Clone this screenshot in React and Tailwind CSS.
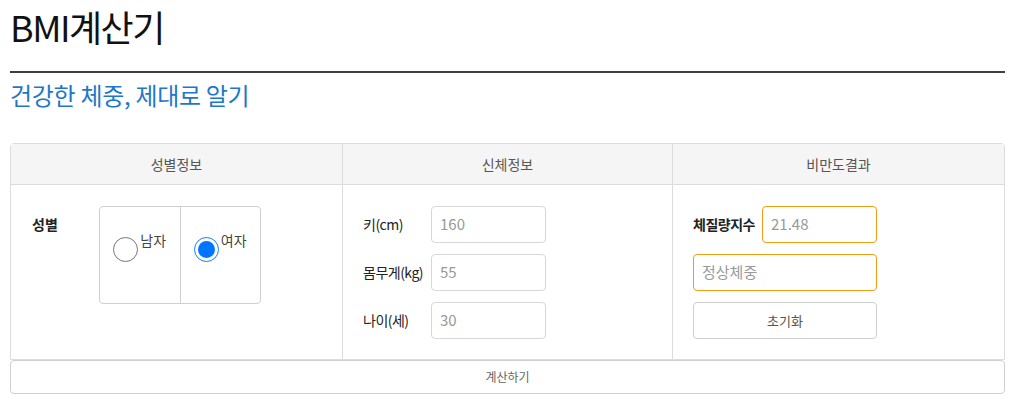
import React from "react";

const font = { fontFamily: '"Noto Sans CJK KR", "Noto Sans", sans-serif' };

function Radio({ checked, label }) {
  return (
    <div className="flex flex-1 items-start justify-center pt-[30px]">
      <span
        className={
          "box-border flex h-[25px] w-[25px] items-center justify-center rounded-full border " +
          (checked ? "border-[#1a7cff] border-[1.5px]" : "border-[#767676]")
        }
      >
        {checked && <span className="h-[17px] w-[17px] rounded-full bg-[#0075ff]" />}
      </span>
      <span className="ml-[2px] -mt-[7px] text-[14px] text-[#444] leading-[20px]">{label}</span>
    </div>
  );
}

function Field({ value, orange }) {
  return (
    <div
      className={
        "box-border flex h-[37px] w-[115px] items-center rounded-[4px] border bg-white px-[8px] text-[15px] text-[#999] " +
        (orange ? "border-[#f59d12]" : "border-[#d7d7d7]")
      }
    >
      {value}
    </div>
  );
}

export default function App() {
  return (
    <div className="bg-white pl-[10px] pr-[7px] pb-[10px] text-[#333]" style={font}>
      <h1 className="m-0 text-[36px] leading-[52px] text-[#111] tracking-[-1.5px]">BMI계산기</h1>
      <div className="mt-[19px] h-[2px] bg-[#3f3d4a]" />
      <h3 className="m-0 mt-[5px] text-[24px] leading-[34px] text-[#1e78c8] tracking-[-0.3px]">
        건강한 체중, 제대로 알기
      </h3>

      <div className="mt-[31px] rounded-t-[4px] border border-[#dcdcdc]">
        <div className="flex h-[41px] border-b border-[#dcdcdc] bg-[#f5f5f5] text-[14px] text-[#555]">
          <div className="flex w-[332px] items-center justify-center border-r border-[#dcdcdc]">성별정보</div>
          <div className="flex w-[330px] items-center justify-center border-r border-[#dcdcdc]">신체정보</div>
          <div className="flex flex-1 items-center justify-center">비만도결과</div>
        </div>
        <div className="flex h-[174px]">
          <div className="flex w-[332px] border-r border-[#dcdcdc] pl-[21px] pt-[21px]">
            <div className="w-[67px] pt-[9px] text-[14px] font-bold text-[#222] leading-[18px]">성별</div>
            <div className="flex h-[98px] w-[162px] rounded-[4px] border border-[#cfcfcf]">
              <div className="flex flex-1 border-r border-[#cfcfcf]">
                <Radio label="남자" />
              </div>
              <div className="flex flex-1">
                <Radio checked label="여자" />
              </div>
            </div>
          </div>
          <div className="flex w-[330px] flex-col gap-[11px] border-r border-[#dcdcdc] pl-[20px] pt-[21px]">
            {[
              ["키(cm)", "160"],
              ["몸무게(kg)", "55"],
              ["나이(세)", "30"],
            ].map(([l, v]) => (
              <div key={l} className="flex items-center">
                <div className="w-[68px] text-[14px] text-[#222] tracking-[-0.5px]">{l}</div>
                <Field value={v} />
              </div>
            ))}
          </div>
          <div className="flex flex-1 flex-col gap-[11px] pl-[20px] pt-[21px]">
            <div className="flex items-center">
              <div className="w-[69px] text-[14px] font-bold text-[#222] tracking-[-0.5px]">체질량지수</div>
              <Field value="21.48" orange />
            </div>
            <div className="box-border flex h-[37px] w-[184px] items-center rounded-[4px] border border-[#f59d12] px-[8px] text-[15px] text-[#999]">
              정상체중
            </div>
            <div className="box-border flex h-[37px] w-[184px] items-center justify-center rounded-[4px] border border-[#cfcfcf] text-[13px] text-[#555]">
              초기화
            </div>
          </div>
        </div>
      </div>
      <div className="flex h-[34px] items-center justify-center rounded-[4px] border border-[#cfcfcf] text-[12px] text-[#666]">
        계산하기
      </div>
    </div>
  );
}
